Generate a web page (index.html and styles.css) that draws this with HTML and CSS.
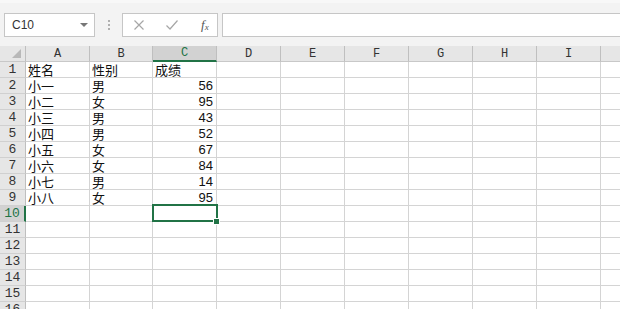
FILE: index.html
```html
<!DOCTYPE html>
<html>
<head>
<meta charset="utf-8">
<link rel="stylesheet" href="styles.css">
</head>
<body>
<div class="app">
  <div class="toolbar">
    <div class="namebox"><span class="ref">C10</span><span class="caret"></span></div>
    <div class="dots"><i></i><i></i><i></i></div>
    <div class="fbtns">
      <svg class="ico" width="12" height="12" viewBox="0 0 12 12"><path d="M1.5 1.5L10.5 10.5M10.5 1.5L1.5 10.5" stroke="#a6a6a6" stroke-width="1.2" fill="none"/></svg>
      <svg class="ico" width="14" height="12" viewBox="0 0 14 12"><path d="M1.5 6.5L5 10L12.5 1.5" stroke="#a6a6a6" stroke-width="1.2" fill="none"/></svg>
      <span class="fx">f<sub>x</sub></span>
    </div>
    <div class="finput"></div>
  </div>
  <div class="sheet">
    <div class="h corner"><span class="tri"></span></div><div class="h">A</div><div class="h">B</div><div class="h sel">C</div><div class="h">D</div><div class="h">E</div><div class="h">F</div><div class="h">G</div><div class="h">H</div><div class="h">I</div><div class="h last"></div>

    <div class="r">1</div><div class="c">姓名</div><div class="c">性别</div><div class="c">成绩</div><div class="c"></div><div class="c"></div><div class="c"></div><div class="c"></div><div class="c"></div><div class="c"></div><div class="c last"></div>
    <div class="r">2</div><div class="c">小一</div><div class="c">男</div><div class="c n">56</div><div class="c"></div><div class="c"></div><div class="c"></div><div class="c"></div><div class="c"></div><div class="c"></div><div class="c last"></div>
    <div class="r">3</div><div class="c">小二</div><div class="c">女</div><div class="c n">95</div><div class="c"></div><div class="c"></div><div class="c"></div><div class="c"></div><div class="c"></div><div class="c"></div><div class="c last"></div>
    <div class="r">4</div><div class="c">小三</div><div class="c">男</div><div class="c n">43</div><div class="c"></div><div class="c"></div><div class="c"></div><div class="c"></div><div class="c"></div><div class="c"></div><div class="c last"></div>
    <div class="r">5</div><div class="c">小四</div><div class="c">男</div><div class="c n">52</div><div class="c"></div><div class="c"></div><div class="c"></div><div class="c"></div><div class="c"></div><div class="c"></div><div class="c last"></div>
    <div class="r">6</div><div class="c">小五</div><div class="c">女</div><div class="c n">67</div><div class="c"></div><div class="c"></div><div class="c"></div><div class="c"></div><div class="c"></div><div class="c"></div><div class="c last"></div>
    <div class="r">7</div><div class="c">小六</div><div class="c">女</div><div class="c n">84</div><div class="c"></div><div class="c"></div><div class="c"></div><div class="c"></div><div class="c"></div><div class="c"></div><div class="c last"></div>
    <div class="r">8</div><div class="c">小七</div><div class="c">男</div><div class="c n">14</div><div class="c"></div><div class="c"></div><div class="c"></div><div class="c"></div><div class="c"></div><div class="c"></div><div class="c last"></div>
    <div class="r">9</div><div class="c">小八</div><div class="c">女</div><div class="c n">95</div><div class="c"></div><div class="c"></div><div class="c"></div><div class="c"></div><div class="c"></div><div class="c"></div><div class="c last"></div>
    <div class="r sel">10</div><div class="c"></div><div class="c"></div><div class="c active"><span class="handle"></span></div><div class="c"></div><div class="c"></div><div class="c"></div><div class="c"></div><div class="c"></div><div class="c"></div><div class="c last"></div>
    <div class="r">11</div><div class="c"></div><div class="c"></div><div class="c"></div><div class="c"></div><div class="c"></div><div class="c"></div><div class="c"></div><div class="c"></div><div class="c"></div><div class="c last"></div>
    <div class="r">12</div><div class="c"></div><div class="c"></div><div class="c"></div><div class="c"></div><div class="c"></div><div class="c"></div><div class="c"></div><div class="c"></div><div class="c"></div><div class="c last"></div>
    <div class="r">13</div><div class="c"></div><div class="c"></div><div class="c"></div><div class="c"></div><div class="c"></div><div class="c"></div><div class="c"></div><div class="c"></div><div class="c"></div><div class="c last"></div>
    <div class="r">14</div><div class="c"></div><div class="c"></div><div class="c"></div><div class="c"></div><div class="c"></div><div class="c"></div><div class="c"></div><div class="c"></div><div class="c"></div><div class="c last"></div>
    <div class="r">15</div><div class="c"></div><div class="c"></div><div class="c"></div><div class="c"></div><div class="c"></div><div class="c"></div><div class="c"></div><div class="c"></div><div class="c"></div><div class="c last"></div>
    <div class="r">16</div><div class="c"></div><div class="c"></div><div class="c"></div><div class="c"></div><div class="c"></div><div class="c"></div><div class="c"></div><div class="c"></div><div class="c"></div><div class="c last"></div>
  </div>
</div>
</body>
</html>
```

FILE: styles.css
```css
* { box-sizing: border-box; }
html, body { margin: 0; padding: 0; }
body {
  width: 620px;
  height: 309px;
  overflow: hidden;
  background: #ffffff;
  font-family: "Liberation Sans", "Noto Sans CJK SC", sans-serif;
}
.app { display: flex; flex-direction: column; height: 309px; }

.toolbar {
  height: 46px;
  flex: none;
  background: #f3f3f3;
  border-top: 3px solid #f8f8f8;
  display: flex;
  align-items: flex-start;
  padding-top: 10px;
  padding-left: 4px;
}
.namebox {
  width: 91px;
  height: 24px;
  background: #fff;
  border: 1px solid #c6c6c6;
  display: flex;
  align-items: center;
  justify-content: space-between;
  padding: 0 6px 0 7px;
}
.ref { font-size: 12px; color: #333; font-family: "Liberation Sans", sans-serif; }
.caret {
  width: 0; height: 0;
  border-left: 4px solid transparent;
  border-right: 4px solid transparent;
  border-top: 4px solid #777;
}
.dots {
  width: 27px;
  height: 24px;
  display: flex;
  flex-direction: column;
  align-items: center;
  justify-content: center;
  gap: 2px;
}
.dots i { display: block; width: 2px; height: 2px; background: #b0b0b0; }
.fbtns {
  width: 96px;
  height: 24px;
  background: #fff;
  border: 1px solid #c6c6c6;
  display: flex;
  align-items: center;
  padding-left: 10px;
  gap: 20px;
}
.fx {
  font-family: "Liberation Serif", serif;
  font-style: italic;
  font-size: 13px;
  color: #555;
  margin-left: 2px;
}
.fx sub { font-size: 9px; vertical-align: -1px; }
.finput {
  flex: 1;
  height: 24px;
  margin-left: 4px;
  background: #fff;
  border: 1px solid #c6c6c6;
  border-right: none;
}

.sheet {
  display: grid;
  grid-template-columns: 26px 64px 63px repeat(7, 64px) 1fr;
  grid-auto-rows: 16px;
  overflow: hidden;
  flex: 1;
}
.h {
  background: #e6e6e6;
  border-right: 1px solid #bfbfbf;
  border-bottom: 1px solid #c8c8c8;
  font-family: "Liberation Mono", "DejaVu Sans Mono", monospace;
  font-size: 12px;
  line-height: 16px;
  text-align: center;
  color: #333;
}
.h.last { border-right: none; }
.h.sel {
  background: #d2d2d2;
  color: #217346;
  border-bottom: 2px solid #217346;
  line-height: 15px;
}
.corner { position: relative; }
.tri {
  position: absolute;
  right: 4px;
  bottom: 3px;
  width: 0; height: 0;
  border-left: 9px solid transparent;
  border-bottom: 9px solid #b8b8b8;
}
.r {
  background: #e6e6e6;
  border-right: 1px solid #bfbfbf;
  border-bottom: 1px solid #d0d0d0;
  font-family: "Liberation Mono", "DejaVu Sans Mono", monospace;
  font-size: 13px;
  line-height: 16px;
  text-align: center;
  color: #333;
}
.r.sel {
  background: #d2d2d2;
  color: #217346;
  border-right: 2px solid #217346;
}
.c {
  border-right: 1px solid #d4d4d4;
  border-bottom: 1px solid #d4d4d4;
  font-family: "Noto Sans CJK SC", sans-serif;
  font-size: 13px;
  line-height: 16px;
  padding-left: 2px;
  color: #111;
  white-space: nowrap;
}
.c.last { border-right: none; }
.c.n {
  text-align: right;
  padding-right: 3px;
  font-family: "Liberation Sans", sans-serif;
  font-size: 13px;
  line-height: 16px;
}
.c.active { position: relative; }
.c.active::after {
  content: "";
  position: absolute;
  left: -1px;
  top: -2px;
  right: -2px;
  bottom: -1px;
  border: 2px solid #217346;
}
.handle {
  position: absolute;
  right: -3px;
  bottom: -3px;
  width: 5px;
  height: 5px;
  background: #217346;
  border: 1px solid #fff;
  z-index: 2;
  box-sizing: content-box;
  margin: -1px;
}
```
